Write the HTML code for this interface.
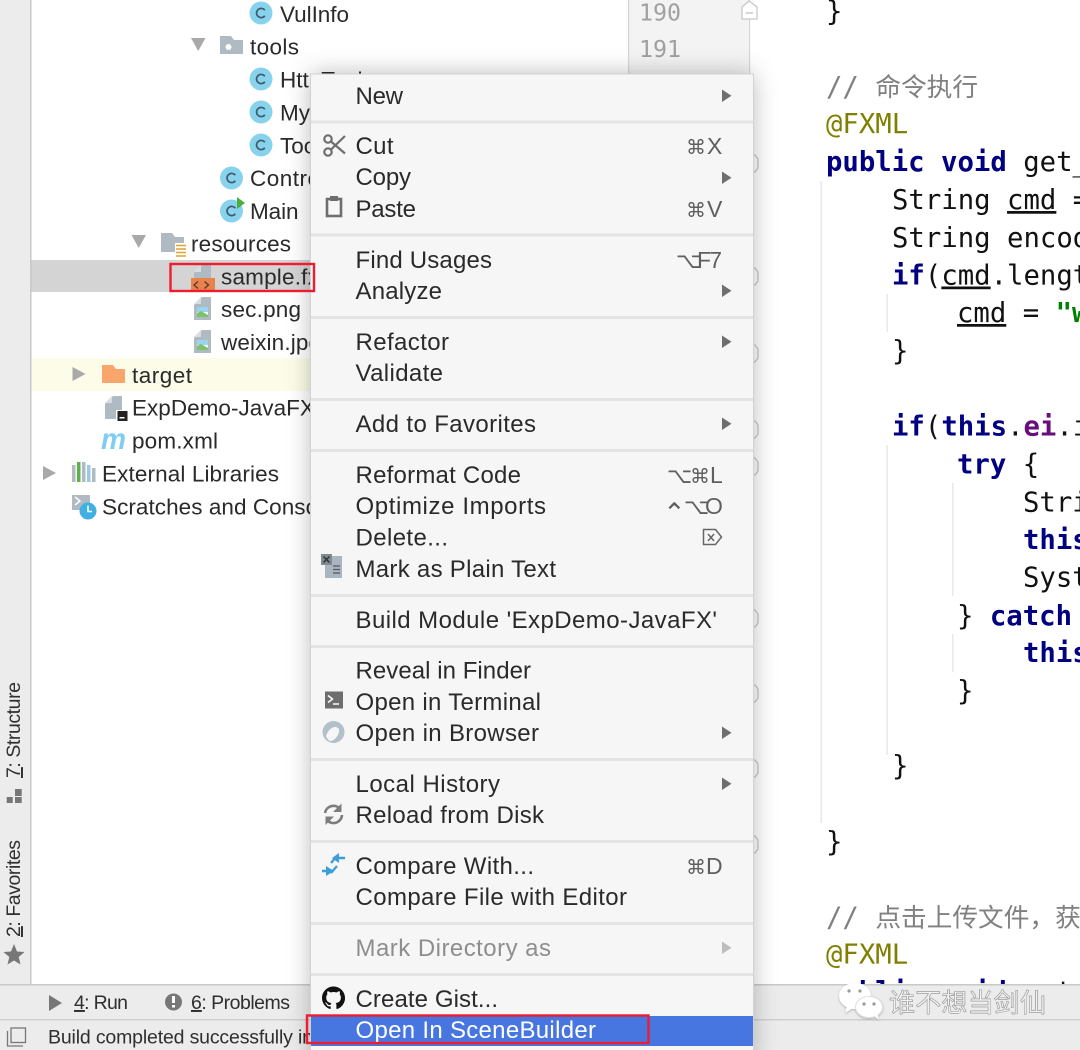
<!DOCTYPE html>
<html><head><meta charset="utf-8"><title>IDE context menu</title>
<style>
html,body{margin:0;padding:0;background:#fff;width:1080px;height:1050px;overflow:hidden}
svg{display:block;filter:blur(.35px)}
.t{font:22.5px "Liberation Sans","DejaVu Sans",sans-serif;fill:#2a2a2a}
.m{font:24px "Liberation Sans","DejaVu Sans",sans-serif;fill:#2a2a2a}
.s{font:19.5px "Liberation Sans",sans-serif;fill:#2f2f2f}
.k{font:20px "DejaVu Sans",sans-serif;fill:#5f5f5f}
.o{font:22px "DejaVu Sans",sans-serif;fill:#5f5f5f}
.l{font:23px "Liberation Sans",sans-serif;fill:#5f5f5f}
.c{font:27.3px "DejaVu Sans Mono","Noto Sans CJK SC",monospace;fill:#111}
.b{font-weight:bold;fill:#000080}
.cm{fill:#808080}
.cj{font-size:25.7px;font-family:"Noto Sans CJK SC",sans-serif}
.an{fill:#808000}
.u{text-decoration:underline}
.g{font:23.3px "DejaVu Sans Mono",monospace;fill:#a0a0a0}
</style></head><body>
<svg width="1080" height="1050" viewBox="0 0 1080 1050" xmlns="http://www.w3.org/2000/svg">
<defs>
<g id="cls"><circle r="11.5" fill="#87d3ee"/><path d="M3.800-2.800A4.600 4.600 0 1 0 3.800 2.800" fill="none" stroke="#3f5a6b" stroke-width="1.700"/></g>
<g id="gfile"><path d="M0 8 8 0H17V23H0Z" fill="#afbac3"/><path d="M0 7 7 0V7Z" fill="#d8dde1"/></g>
<g id="pic"><use href="#gfile"/><rect x="3" y="10" width="11" height="10" fill="#fff"/><rect x="3" y="10" width="11" height="5" fill="#9bd4ee"/><path d="M3 20V16L7 14 14 18V20Z" fill="#7dc36b"/></g>
<g id="fm"><path d="M0 0H4L7 4V13L4 17H0" fill="#fff" stroke="#c8c8c8" stroke-width="1.300"/></g>
</defs>

<rect width="1080" height="1050" fill="#fff"/>
<rect x="0" y="0" width="30" height="985" fill="#ececec"/>
<rect x="30" y="0" width="1.500" height="985" fill="#c9c9c9"/>

<!-- gutter -->
<rect x="628" y="0" width="121" height="985" fill="#f3f3f3"/>
<rect x="628" y="0" width="1.200" height="985" fill="#d6d6d6"/>
<rect x="749" y="0" width="1.200" height="985" fill="#d6d6d6"/>
<text x="639" y="20.500" class="g">190</text>
<text x="639" y="57" class="g">191</text>
<path d="M742 19V7L749 1 757 7V19Z" fill="#fff" stroke="#c8c8c8" stroke-width="1.300"/><path d="M745.500 13H753" stroke="#c0c0c0" stroke-width="1.300"/>
<use href="#fm" x="751" y="155"/><use href="#fm" x="751" y="268"/><use href="#fm" x="751" y="345"/><use href="#fm" x="751" y="421"/><use href="#fm" x="751" y="458"/><use href="#fm" x="751" y="610"/><use href="#fm" x="751" y="685"/><use href="#fm" x="751" y="760"/><use href="#fm" x="751" y="836"/>

<!-- tree rows -->
<rect x="31.500" y="260" width="290" height="32" fill="#d4d4d4"/>
<rect x="31.500" y="358" width="290" height="33" fill="#fcfce8"/>

<!-- tree arrows -->
<g fill="#a9a9a9">
<path d="M191 38H205.500L198.200 51Z"/>
<path d="M131.500 235H146L138.700 248Z"/>
<path d="M72.500 367V381L85.500 374Z"/>
<path d="M43 466V480L56 473Z"/>
</g>

<!-- tree icons -->
<use href="#cls" x="261" y="13"/>
<path d="M220 36H231L234 40H243V54H220Z" fill="#afbac3"/><circle cx="228.500" cy="47" r="3" fill="#fff"/>
<use href="#cls" x="261" y="79"/><use href="#cls" x="261" y="112"/><use href="#cls" x="261" y="145"/>
<use href="#cls" x="231.500" y="178"/><use href="#cls" x="231.500" y="211"/>
<path d="M237 197V209L245 203Z" fill="#4caf3c"/>
<path d="M161 233H172L175 237H184V252H161Z" fill="#afbac3"/>
<rect x="175" y="243" width="11" height="14" fill="#fff"/>
<path d="M176 245.500H186M176 249H186M176 252.500H186M176 256H186" stroke="#e0a030" stroke-width="1.600"/>

<use href="#gfile" x="194" y="265"/>
<rect x="191" y="278" width="24" height="14" fill="#e8834e"/>
<path d="M198 281.500 194 285 198 288.500M204.500 281.500 208.500 285 204.500 288.500" fill="none" stroke="#5a3a2a" stroke-width="1.400"/>
<use href="#pic" x="194" y="297"/>
<use href="#pic" x="194" y="330"/>
<path d="M102 365H113L116 369H125V383H102Z" fill="#f9a66c"/>
<use href="#gfile" x="105" y="396"/>
<rect x="116" y="410" width="11" height="11" fill="#fff"/><rect x="117.500" y="411" width="10" height="10" fill="#222"/><rect x="119.500" y="417" width="5" height="1.500" fill="#fff"/>
<text x="101" y="449" style="font:italic bold 30px 'Liberation Sans',sans-serif;fill:#7fcdf0" textLength="25" lengthAdjust="spacingAndGlyphs">m</text>
<g><rect x="72" y="465" width="3.500" height="17" fill="#afbac3"/><rect x="77" y="462" width="3.500" height="20" fill="#5cb247"/><rect x="82" y="462" width="3.500" height="20" fill="#afbac3"/><rect x="87" y="465" width="3.500" height="17" fill="#9cc9e2"/><rect x="92" y="468" width="3.500" height="14" fill="#afbac3"/></g>
<rect x="72" y="495" width="18" height="15" fill="#afbac3"/><path d="M75 497 80 501 75 505" fill="none" stroke="#fff" stroke-width="1.500"/>
<circle cx="88" cy="511" r="8.500" fill="#3fb0e0"/><path d="M88 505.500V511.500H92" fill="none" stroke="#fff" stroke-width="1.500"/>

<!-- tree text -->
<text class="t" x="280" y="22" textLength="69">VulInfo</text>
<text class="t" x="250" y="54.500" textLength="49">tools</text>
<text class="t" x="280" y="87.500">HttpTools</text>
<text class="t" x="280" y="120.500">MyUtils</text>
<text class="t" x="280" y="153.500">Tools</text>
<text class="t" x="250" y="186" textLength="102">Controller</text>
<text class="t" x="250" y="219" textLength="48.500">Main</text>
<text class="t" x="191" y="251.500" textLength="100">resources</text>
<text class="t" x="221" y="284.500" textLength="122">sample.fxml</text>
<text class="t" x="221" y="317" textLength="80">sec.png</text>
<text class="t" x="221" y="350" textLength="100">weixin.jpg</text>
<text class="t" x="132" y="383" textLength="60">target</text>
<text class="t" x="132" y="415.500" textLength="218">ExpDemo-JavaFX.iml</text>
<text class="t" x="132" y="448.500" textLength="86">pom.xml</text>
<text class="t" x="102" y="481.500" textLength="177">External Libraries</text>
<text class="t" x="102" y="514.500" textLength="245">Scratches and Consoles</text>

<!-- side tabs -->
<text class="s" transform="translate(20,778) rotate(-90)" textLength="96"><tspan text-decoration="underline">7</tspan>: Structure</text>
<text class="s" transform="translate(20,937) rotate(-90)" textLength="97"><tspan text-decoration="underline">2</tspan>: Favorites</text>
<path d="M15 789H21.700V796H15ZM6.700 797H12.700V803H6.700ZM15 797H21.700V803H15Z" fill="#777"/>
<path d="M14 944 17 951.500 24.500 952 18.700 957 20.500 964.500 14 960.500 7.500 964.500 9.300 957 3.500 952 11 951.500Z" fill="#777"/>

<!-- indent guides -->
<g fill="#e8e8e8">
<rect x="820.500" y="181" width="1.500" height="642"/>
<rect x="886.500" y="294" width="1.500" height="38"/>
<rect x="886.500" y="445" width="1.500" height="310"/>
<rect x="952" y="483" width="1.500" height="113"/>
<rect x="952" y="634" width="1.500" height="38"/>
</g>

<!-- code -->
<g class="c">
<text x="826" y="20.500">}</text>
<text x="826" y="96" class="cm">// <tspan class="cj">命令执行</tspan></text>
<text x="826" y="133" class="an">@FXML</text>
<text x="826" y="171"><tspan class="b">public void</tspan> get_uploadFile</text>
<text x="892" y="209">String <tspan class="u">cmd</tspan> = this</text>
<text x="892" y="247">String encoding</text>
<text x="892" y="284.500"><tspan class="b">if</tspan>(<tspan class="u">cmd</tspan>.length()</text>
<text x="957" y="322"><tspan class="u">cmd</tspan> = <tspan style="fill:#008000;font-weight:bold">"whoami"</tspan></text>
<text x="892" y="360">}</text>
<text x="892" y="435.500"><tspan class="b">if</tspan>(<tspan class="b">this</tspan>.<tspan style="fill:#660e7a;font-weight:bold">ei</tspan>.isSelected</text>
<text x="957" y="473.500"><tspan class="b">try</tspan> {</text>
<text x="1023" y="511.500">String</text>
<text x="1023" y="549"><tspan class="b">this</tspan>.tA</text>
<text x="1023" y="586.500">System</text>
<text x="957" y="625">} <tspan class="b">catch</tspan> (Exception</text>
<text x="1023" y="662"><tspan class="b">this</tspan>.tA</text>
<text x="957" y="700">}</text>
<text x="892" y="775">}</text>
<text x="826" y="851">}</text>
<text x="826" y="926.500" class="cm">// <tspan class="cj">点击上传文件&#xFF0C;获取</tspan></text>
<text x="826" y="963.500" class="an">@FXML</text>
<text x="826" y="1001"><tspan class="b">public void</tspan> get</text>
</g>

<!-- bottom bars -->
<rect x="0" y="984" width="1080" height="66" fill="#ececec"/>
<rect x="0" y="984" width="1080" height="1.500" fill="#c9c9c9"/>
<rect x="0" y="1019" width="1080" height="1.500" fill="#cfcfcf"/>
<path d="M49 995V1011L62 1003Z" fill="#777"/>
<text class="s" x="74" y="1009" textLength="54"><tspan text-decoration="underline">4</tspan>: Run</text>
<circle cx="173.500" cy="1002" r="8.500" fill="#777"/><rect x="172" y="996" width="3" height="7" fill="#fff"/><rect x="172" y="1005" width="3" height="2.500" fill="#fff"/>
<text class="s" x="191" y="1009" textLength="99"><tspan text-decoration="underline">6</tspan>: Problems</text>
<rect x="11" y="1028" width="14.500" height="14.500" fill="none" stroke="#777" stroke-width="1.300"/>
<path d="M7.500 1031V1046H23" fill="none" stroke="#777" stroke-width="1.300"/>
<text class="s" x="48" y="1043.500" textLength="265">Build completed successfully in</text>

<!-- watermark -->
<g style="filter:drop-shadow(0 1px 1px rgba(0,0,0,.25))">
<ellipse cx="855" cy="996" rx="16" ry="13" fill="#fff"/>
<path d="M847 1006 845 1013 855 1007Z" fill="#fff"/>
<circle cx="849" cy="991" r="1.600" fill="#999"/><circle cx="860" cy="991" r="1.600" fill="#999"/>
<ellipse cx="869" cy="1007" rx="13.500" ry="10.500" stroke="#e0e0e0" fill="#fff"/>
<path d="M873 1015 879 1020 877 1012Z" fill="#fff"/>
<circle cx="864" cy="1004" r="1.600" fill="#999"/><circle cx="874" cy="1004" r="1.600" fill="#999"/>
</g>
<text x="889" y="1012" textLength="157" style="font:26px 'Noto Sans CJK SC',sans-serif;fill:#f2f2f2;stroke:#9a9a9a;stroke-width:.5px;filter:drop-shadow(.8px .8px 0 #555)">谁不想当剑仙</text>

<!-- menu -->
<rect x="311" y="74" width="442" height="990" fill="#f6f6f6" style="filter:drop-shadow(0 0 12px rgba(0,0,0,.28))"/>
<rect x="310.500" y="74" width="443" height="990" fill="none" stroke="#d2d2d2" stroke-width="1"/>
<g fill="#e4e4e4">
<rect x="311" y="120.500" width="442" height="3"/>
<rect x="311" y="233.500" width="442" height="3"/>
<rect x="311" y="316" width="442" height="3"/>
<rect x="311" y="398" width="442" height="3"/>
<rect x="311" y="449" width="442" height="3"/>
<rect x="311" y="594" width="442" height="3"/>
<rect x="311" y="645" width="442" height="3"/>
<rect x="311" y="758" width="442" height="3"/>
<rect x="311" y="840" width="442" height="3"/>
<rect x="311" y="922" width="442" height="3"/>
<rect x="311" y="973" width="442" height="3"/>
</g>
<rect x="311" y="1016" width="442" height="30" fill="#4876e0"/>

<g>
<text class="m" x="355.500" y="104" textLength="47.500">New</text>
<text class="m" x="355.500" y="154" textLength="38">Cut</text>
<text class="m" x="355.500" y="185" textLength="55.500">Copy</text>
<text class="m" x="355.500" y="217" textLength="60.500">Paste</text>
<text class="m" x="355.500" y="268" textLength="136.500">Find Usages</text>
<text class="m" x="355.500" y="299" textLength="86.500">Analyze</text>
<text class="m" x="355.500" y="350" textLength="93.500">Refactor</text>
<text class="m" x="355.500" y="381" textLength="87.500">Validate</text>
<text class="m" x="355.500" y="432" textLength="180.500">Add to Favorites</text>
<text class="m" x="355.500" y="483" textLength="165.500">Reformat Code</text>
<text class="m" x="355.500" y="514" textLength="190.500">Optimize Imports</text>
<text class="m" x="355.500" y="545.500" textLength="92.500">Delete...</text>
<text class="m" x="355.500" y="577" textLength="200.500">Mark as Plain Text</text>
<text class="m" x="355.500" y="628" textLength="361.500">Build Module 'ExpDemo-JavaFX'</text>
<text class="m" x="355.500" y="678.500" textLength="175.500">Reveal in Finder</text>
<text class="m" x="355.500" y="710" textLength="185.500">Open in Terminal</text>
<text class="m" x="355.500" y="741" textLength="183.500">Open in Browser</text>
<text class="m" x="355.500" y="792" textLength="144.500">Local History</text>
<text class="m" x="355.500" y="823" textLength="188.500">Reload from Disk</text>
<text class="m" x="355.500" y="874" textLength="178.500">Compare With...</text>
<text class="m" x="355.500" y="905" textLength="271.500">Compare File with Editor</text>
<text class="m" x="355.500" y="956" textLength="195.500" style="fill:#8e8e8e">Mark Directory as</text>
<text class="m" x="355.500" y="1007" textLength="142.500">Create Gist...</text>
<text class="m" x="355.500" y="1038" textLength="240.500" style="fill:#fff">Open In SceneBuilder</text>
</g>

<!-- shortcuts -->
<text class="k" x="686" y="154">⌘</text><text class="l" x="707" y="154">X</text>
<text class="k" x="686" y="217">⌘</text><text class="l" x="707" y="217">V</text>
<text class="o" x="676" y="268">⌥</text><text class="l" x="697" y="268" textLength="25">F7</text>
<text class="o" x="667" y="483">⌥</text><text class="k" x="690" y="483">⌘</text><text class="l" x="710" y="483">L</text>
<text class="o" x="663" y="522" style="font-size:27px">⌃</text><text class="o" x="684" y="514">⌥</text><text class="l" x="705" y="514">O</text>
<text class="k" x="686" y="874">⌘</text><text class="l" x="706" y="874">D</text>
<path d="M703.500 529.500H715.500L721.500 537 715.500 544.500H703.500Z" fill="none" stroke="#666" stroke-width="1.500"/>
<path d="M708 534 714 541M714 534 708 541" stroke="#666" stroke-width="1.500"/>

<!-- submenu arrows -->
<g fill="#6f6f6f">
<path d="M722 89.500V102L731.500 95.700Z"/>
<path d="M722 171.500V184L731.500 177.700Z"/>
<path d="M722 284.500V297L731.500 290.700Z"/>
<path d="M722 335.500V348L731.500 341.700Z"/>
<path d="M722 417.500V430L731.500 423.700Z"/>
<path d="M722 726.500V739L731.500 732.700Z"/>
<path d="M722 777.500V790L731.500 783.700Z"/>
</g>
<path d="M722 941.500V954L731.500 947.700Z" fill="#bdbdbd"/>

<!-- menu icons -->
<g fill="none" stroke="#6e6e6e" stroke-width="2.200">
<circle cx="328" cy="139" r="3.700"/><circle cx="328" cy="152" r="3.700"/>
<path d="M331 141.500 345 153.500M331 149.500 345 136"/>
<rect x="327" y="199" width="14" height="17" stroke-width="2.600"/>
</g>
<rect x="330" y="196" width="8" height="5" fill="#6e6e6e"/>
<rect x="325" y="556" width="17" height="22" fill="#a9b6c0"/>
<rect x="321" y="554" width="11" height="11" fill="#7f8b93"/>
<path d="M323.500 556.500 329.500 562.500M329.500 556.500 323.500 562.500" stroke="#333" stroke-width="1.500"/>
<path d="M333 566H340M333 569.500H340M333 573H340" stroke="#556" stroke-width="1.200"/>
<rect x="325" y="691.500" width="18" height="17" fill="#6e6e6e"/>
<path d="M328 695.500 332.500 699 328 702.500" fill="none" stroke="#fff" stroke-width="1.500"/><path d="M333 704H339" stroke="#fff" stroke-width="1.500"/>
<circle cx="333.500" cy="732" r="11" fill="#b4c0c8"/>
<path d="M326 736C329 727 336 725 339 729 340 734 335 741 330 741 328 740 327 738 326 736Z" fill="#f4f6f7"/>
<g fill="none" stroke="#7d7d7d" stroke-width="2.600">
<path d="M325 813A8.500 8.500 0 0 1 340 809"/><path d="M342 815A8.500 8.500 0 0 1 327 820"/>
</g>
<path d="M341.500 803.500V812H333ZM325.500 825V816.500H334Z" fill="#7d7d7d"/>
<g fill="none" stroke="#3d9fd9" stroke-width="2.400">
<path d="M345 858H335M331 863 337 856M322 871H332M337 866 331 873"/>
</g>
<path d="M339 853V863L332 858ZM326 866V876L334 871Z" fill="#3d9fd9"/>
<path transform="translate(322,986.500) scale(1.440)" fill="#111" d="M8 0C3.580 0 0 3.580 0 8c0 3.540 2.290 6.530 5.470 7.590.4.070.55-.17.55-.38 0-.19-.01-.82-.01-1.490-2.010.37-2.530-.49-2.690-.94-.09-.23-.48-.94-.82-1.130-.28-.15-.68-.52-.01-.53.63-.01 1.080.58 1.230.82.72 1.210 1.870.87 2.330.66.07-.52.28-.87.51-1.070-1.780-.2-3.640-.89-3.640-3.950 0-.87.31-1.590.82-2.150-.08-.2-.36-1.020.08-2.120 0 0 .67-.21 2.200.82.64-.18 1.320-.27 2-.27.68 0 1.360.09 2 .27 1.530-1.040 2.200-.82 2.200-.82.44 1.100.16 1.920.08 2.120.51.56.82 1.270.82 2.150 0 3.070-1.870 3.750-3.650 3.950.29.25.54.73.54 1.480 0 1.070-.01 1.930-.01 2.200 0 .21.15.46.55.38A8.013 8.013 0 0 0 16 8c0-4.420-3.580-8-8-8z"/>

<!-- red boxes -->
<rect x="170.500" y="264" width="143.500" height="27" fill="none" stroke="#ed1c2e" stroke-width="2.400"/>
<rect x="307" y="1015.500" width="341.500" height="27.500" fill="none" stroke="#ed1c2e" stroke-width="2.400"/>
</svg>
</body></html>
